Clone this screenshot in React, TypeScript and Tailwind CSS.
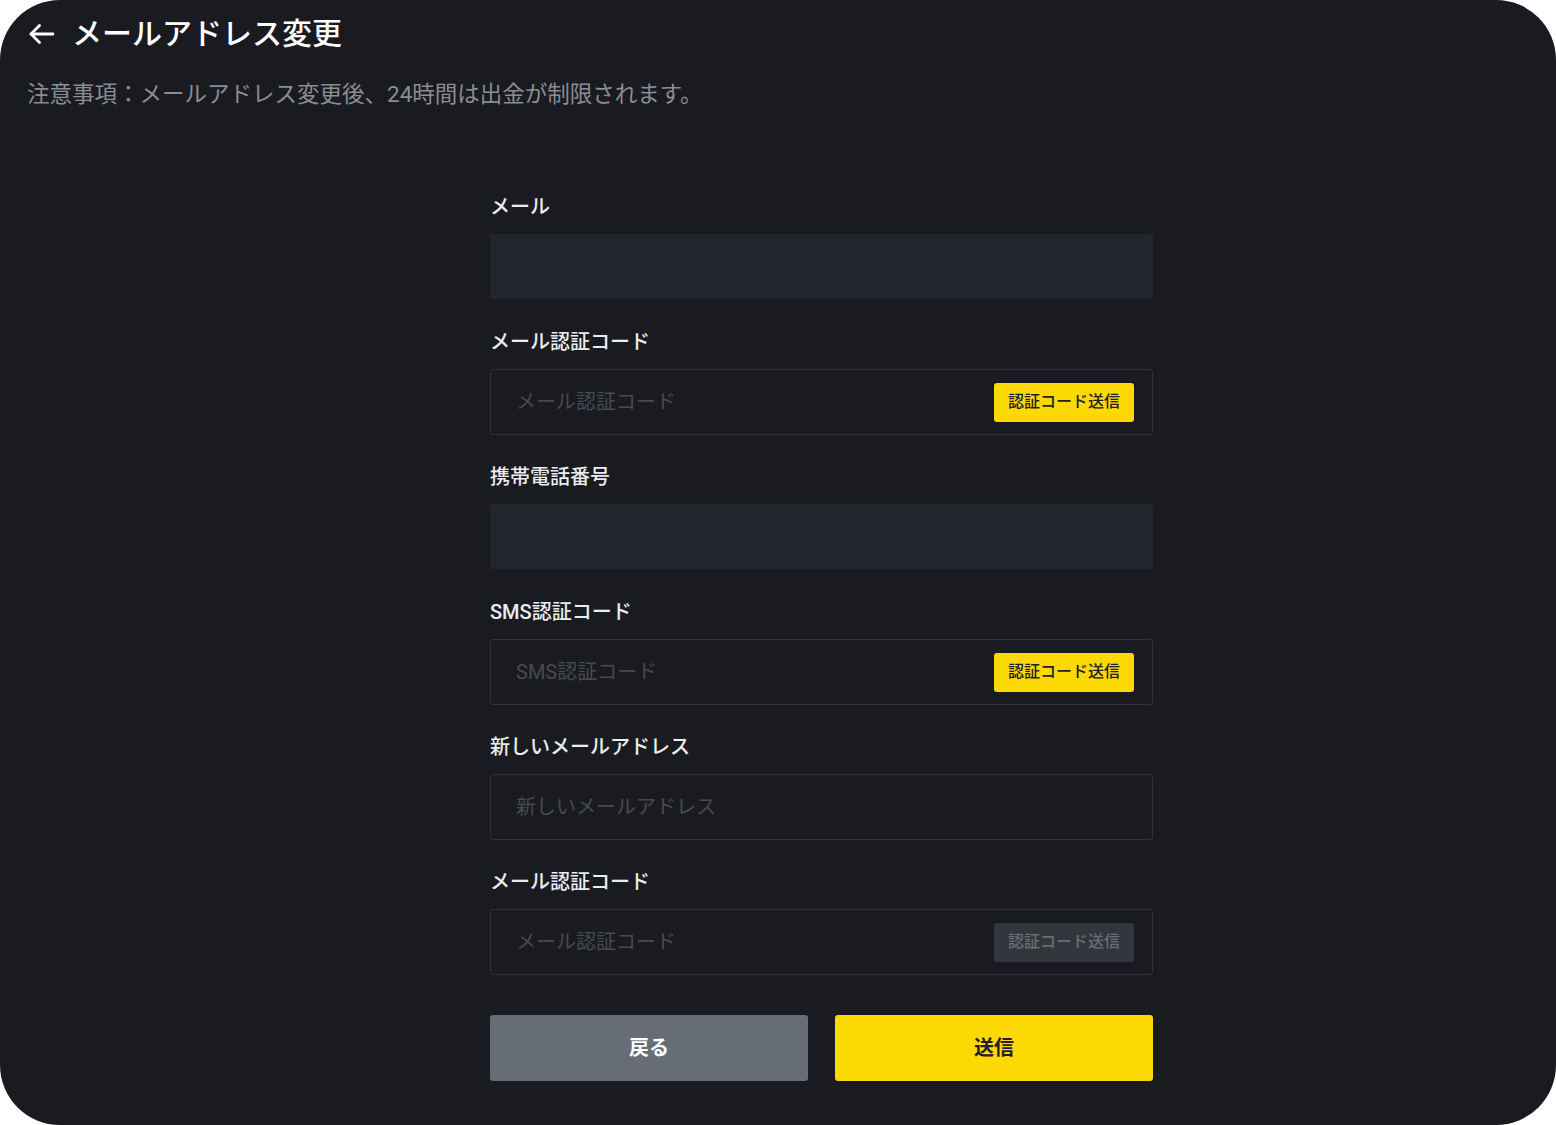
import React from "react";

const font = { fontFamily: 'Roboto, "Noto Sans CJK JP", sans-serif' };

function Label({ children }: { children: React.ReactNode }) {
  return (
    <div className="text-[20px] leading-[24px] font-medium text-[#eaecef] mb-[15px]">{children}</div>
  );
}

function FilledInput() {
  return <div className="h-[65px] w-full rounded-[2px] bg-[#22252c]" />;
}

function CodeInput({ placeholder, active = true, button = true }: { placeholder: string; active?: boolean; button?: boolean }) {
  return (
    <div className="h-[66px] w-full rounded-[3px] border border-[#2f3238] flex items-center pl-[25px] pr-[18px]">
      <span className="flex-1 text-[20px] text-[#474a50]">{placeholder}</span>
      {button && (
        <div
          className={
            "h-[39px] w-[140px] rounded-[3px] flex items-center justify-center text-[16px] font-medium " +
            (active ? "bg-[#fcd905] text-[#1e2026]" : "bg-[#33363c] text-[#6b6e75]")
          }
        >
          認証コード送信
        </div>
      )}
    </div>
  );
}

export default function App() {
  return (
    <div className="w-[1556px] h-[1125px] bg-white" style={font}>
      <div className="w-full h-full rounded-[60px] bg-[#1a1b20] overflow-hidden">
        <div className="flex items-center pl-[28px] pt-[14px] h-[40px] box-content">
          <svg width="27" height="22" viewBox="0 0 27 22" fill="none" stroke="#ffffff" strokeWidth="2.8" strokeLinecap="round" strokeLinejoin="round">
            <path d="M25 11H3" />
            <path d="M11.5 2.5 3 11l8.5 8.5" />
          </svg>
          <span className="ml-[17px] text-[30px] leading-[40px] font-medium text-white">メールアドレス変更</span>
        </div>
        <div className="pl-[27px] mt-[27px] text-[22.5px] leading-[26px] text-[#8a8d93]">
          注意事項：メールアドレス変更後、24時間は出金が制限されます。
        </div>
        <div className="ml-[490px] w-[663px] mt-[88px] flex flex-col">
          <Label>メール</Label>
          <FilledInput />
          <div className="h-[31px]" />
          <Label>メール認証コード</Label>
          <CodeInput placeholder="メール認証コード" />
          <div className="h-[30px]" />
          <Label>携帯電話番号</Label>
          <FilledInput />
          <div className="h-[31px]" />
          <Label>SMS認証コード</Label>
          <CodeInput placeholder="SMS認証コード" />
          <div className="h-[30px]" />
          <Label>新しいメールアドレス</Label>
          <CodeInput placeholder="新しいメールアドレス" button={false} />
          <div className="h-[30px]" />
          <Label>メール認証コード</Label>
          <CodeInput placeholder="メール認証コード" active={false} />
          <div className="flex gap-[27px] mt-[40px]">
            <div className="h-[66px] flex-1 rounded-[3px] bg-[#676d76] flex items-center justify-center text-[20px] font-bold text-white">戻る</div>
            <div className="h-[66px] flex-1 rounded-[3px] bg-[#fcd905] flex items-center justify-center text-[20px] font-bold text-[#1e2026]">送信</div>
          </div>
        </div>
      </div>
    </div>
  );
}
